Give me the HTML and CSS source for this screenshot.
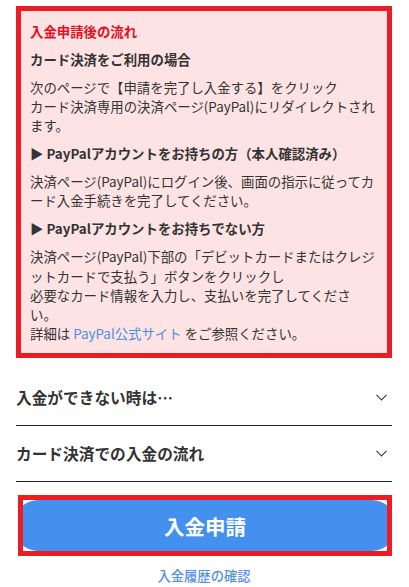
FILE: index.html
```html
<!DOCTYPE html>
<html lang="ja">
<head>
    <meta charset="UTF-8">
    <meta name="viewport" content="width=device-width, initial-scale=1.0">
    <title>入金申請</title>
    <link rel="stylesheet" href="styles.css">
</head>
<body>
    <div class="page">
        <div class="notice">
            <p class="notice-title">入金申請後の流れ</p>
            <p class="notice-head">カード決済をご利用の場合</p>
            <p>次のページで【申請を完了し入金する】をクリック<br>カード決済専用の決済ページ(PayPal)にリダイレクトされます。</p>
            <p class="notice-head">▶ PayPalアカウントをお持ちの方（本人確認済み）</p>
            <p>決済ページ(PayPal)にログイン後、画面の指示に従ってカード入金手続きを完了してください。</p>
            <p class="notice-head">▶ PayPalアカウントをお持ちでない方</p>
            <p>決済ページ(PayPal)下部の「デビットカードまたはクレジットカードで支払う」ボタンをクリックし<br>必要なカード情報を入力し、支払いを完了してください。<br>詳細は <a href="#">PayPal公式サイト</a> をご参照ください。</p>
        </div>

        <div class="accordion">
            <div class="acc-row">
                <span>入金ができない時は…</span>
                <svg class="chevron" width="11" height="7" viewBox="0 0 11 7"><polyline points="0.5,0.8 5.5,5.8 10.5,0.8" fill="none" stroke="#444" stroke-width="1.2"/></svg>
            </div>
            <div class="acc-row">
                <span>カード決済での入金の流れ</span>
                <svg class="chevron" width="11" height="7" viewBox="0 0 11 7"><polyline points="0.5,0.8 5.5,5.8 10.5,0.8" fill="none" stroke="#444" stroke-width="1.2"/></svg>
            </div>
        </div>

        <div class="apply-wrap">
            <button class="apply-btn">入金申請</button>
        </div>

        <a class="history-link" href="#">入金履歴の確認</a>
    </div>
</body>
</html>
```

FILE: styles.css
```css
body {
    margin: 0;
    font-family: "Noto Sans CJK JP", "Noto Sans", sans-serif;
    color: #333;
    background: #fff;
}
.page {
    padding: 6px 17px 0 16px;
}
.notice {
    border: 5px solid #ec1c24;
    background: #fde3e4;
    padding: 11px 10px 9.5px 9px;
    font-size: 13.4px;
    line-height: 19.3px;
}
.notice p {
    margin: 0 0 8.6px;
}
.notice p:last-child {
    margin-bottom: 0;
}
.notice-title {
    color: #e5101c;
    font-weight: bold;
}
.notice-head {
    font-weight: bold;
}
.notice a {
    color: #4a90e2;
    text-decoration: none;
}
.accordion {
    margin-top: 12px;
}
.acc-row {
    height: 55px;
    border-bottom: 1px solid #222;
    display: flex;
    align-items: center;
    justify-content: space-between;
    font-size: 15.7px;
    font-weight: bold;
    color: #333;
}
.chevron {
    margin-right: 5px;
}
.apply-wrap {
    margin: 13px 0 0 2px;
    border: 5px solid #ec1c24;
    height: 51px;
    overflow: hidden;
    display: flex;
}
.apply-btn {
    flex: 1;
    margin: 0 -10px;
    border: none;
    border-radius: 26px;
    background: #4490ee;
    color: #fff;
    font-family: inherit;
    font-size: 20.5px;
    font-weight: bold;
    cursor: pointer;
}
.history-link {
    display: block;
    margin-top: 10px;
    text-align: center;
    font-size: 13.3px;
    line-height: 20px;
    font-weight: 500;
    color: #5590e6;
    text-decoration: none;
}
```
